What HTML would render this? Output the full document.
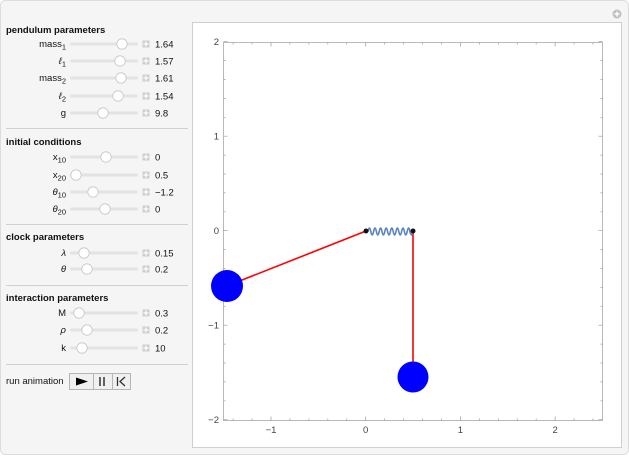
<!DOCTYPE html>
<html><head><meta charset="utf-8"><style>
html,body{margin:0;padding:0;background:#fff;}
svg{display:block;font-family:"Liberation Sans",sans-serif;}
</style></head><body>
<svg id="s" width="629" height="456" viewBox="0 0 629 456" xmlns="http://www.w3.org/2000/svg">
<rect x="0.5" y="0.5" width="628" height="454" rx="5" fill="#f5f5f5" stroke="#dcdcdc"/>
<rect x="192.5" y="22.5" width="429" height="425" fill="#fff" stroke="#cfcfcf"/>
<circle cx="617" cy="14" r="4.5" fill="#c0c0c0"/>
<path d="M614.5 14h5M617 11.5v5" stroke="#fff" stroke-width="1.4"/>
<g id="panel" font-size="9.5" fill="#111"></g>
<g id="plot"></g>
</svg>
<script>
const NS="http://www.w3.org/2000/svg";
function el(p,t,a,txt){const e=document.createElementNS(NS,t);for(const k in a)e.setAttribute(k,a[k]);if(txt!==undefined)e.innerHTML=txt;p.appendChild(e);return e;}
const P=document.getElementById('panel');
const heads=[["pendulum parameters",33],["initial conditions",145],["clock parameters",240],["interaction parameters",301]];
heads.forEach(h=>el(P,'text',{x:6,y:h[1],'font-weight':'bold','font-size':'9.5'},h[0]));
[128,224,285,364].forEach(y=>el(P,'rect',{x:6,y:y,width:182,height:1,fill:'#d0d0d0'}));
const sub=(a,b,it)=>(it?'<tspan font-style="italic">'+a+'</tspan>':a)+'<tspan font-size="7.5" dy="2.5">'+b+'</tspan>';
const rows=[
[sub('mass','1'),44,122,'1.64'],[sub('ℓ','1',1),61,120,'1.57'],[sub('mass','2'),78,121,'1.61'],[sub('ℓ','2',1),96,118,'1.54'],['g',113,103,'9.8'],
[sub('x','10'),157,106,'0'],[sub('x','20'),175,76,'0.5'],[sub('θ','10',1),192,93,'−1.2'],[sub('θ','20',1),209,105,'0'],
['<tspan font-style="italic">λ</tspan>',253,84,'0.15'],['<tspan font-style="italic">θ</tspan>',269,87,'0.2'],
['M',313,79,'0.3'],['<tspan font-style="italic">ρ</tspan>',330,87,'0.2'],['k',348,82,'10']];
rows.forEach(r=>{const y=r[1];
 el(P,'text',{x:66,y:y+3,'text-anchor':'end'},r[0]);
 el(P,'rect',{x:70,y:y-1.5,width:68,height:3,rx:1.5,fill:'#e3e3e3'});
 el(P,'circle',{cx:r[2],cy:y,r:5.2,fill:'#fff',stroke:'#c6c6c6','stroke-width':0.8});
 el(P,'rect',{x:142.5,y:y-3.5,width:7,height:7,fill:'#cfcfcf'});
 el(P,'path',{d:`M143.5 ${y}h5M146 ${y-2.5}v5`,stroke:'#fff','stroke-width':1.2});
 el(P,'text',{x:155,y:y+3.5},r[3]);
});
el(P,'text',{x:6,y:384},'run animation');
el(P,'rect',{x:69.5,y:373.5,width:61,height:16,fill:'#f0f0f0',stroke:'#b5b5b5'});
el(P,'path',{d:'M93.5 373.5v16M112.5 373.5v16',stroke:'#b5b5b5'});
el(P,'path',{d:'M76 377.5l12 4-12 4z',fill:'#000'});
el(P,'path',{d:'M100 377v9M104 377v9',stroke:'#333','stroke-width':1.5});
el(P,'path',{d:'M117.5 377v9M125 377l-5 4.5 5 4.5',stroke:'#333','stroke-width':1.3,fill:'none'});
const G=document.getElementById('plot');
const X=v=>365.7+v*94.7, Y=v=>230.7-v*94.5;
el(G,'rect',{x:223.5,y:42.5,width:379,height:378,fill:'none',stroke:'#a8a8a8','stroke-width':0.8});
for(let i=-7;i<=12;i++){const v=i/5;const x=X(v);if(x<224||x>602)continue;const maj=i%5==0;const L=maj?4:2;
 el(G,'path',{d:`M${x} 420.5v${-L}M${x} 42.5v${L}`,stroke:'#999','stroke-width':0.7});
 if(maj)el(G,'text',{x:x,y:433,'text-anchor':'middle','font-size':'9.5',fill:'#444'},v<0?'−'+(-v):v);}
for(let i=-10;i<=10;i++){const v=i/5;const y=Y(v);const maj=i%5==0;const L=maj?4:2;
 el(G,'path',{d:`M223.5 ${y}h${L}M602.5 ${y}h${-L}`,stroke:'#999','stroke-width':0.7});
 if(maj)el(G,'text',{x:219,y:y+3.5,'text-anchor':'end','font-size':'9.5',fill:'#444'},v<0?'−'+(-v):v);}
el(G,'line',{x1:366,y1:231,x2:227,y2:286,stroke:'#f00','stroke-width':1.6});
el(G,'line',{x1:413,y1:231,x2:413,y2:377,stroke:'#f00','stroke-width':1.6});
let d='M368 231.5';for(let i=0;i<8;i++)d+=' q1.4,-7 2.8,0 q1.4,7 2.8,0';
el(G,'path',{d:d,fill:'none',stroke:'#5a82c0','stroke-width':1.6});
el(G,'circle',{cx:366,cy:231,r:2.5,fill:'#111'});
el(G,'circle',{cx:413,cy:231,r:2.5,fill:'#111'});
el(G,'circle',{cx:227,cy:286,r:16,fill:'#00f'});
el(G,'circle',{cx:413,cy:377,r:15.5,fill:'#00f'});
</script>
</body></html>
